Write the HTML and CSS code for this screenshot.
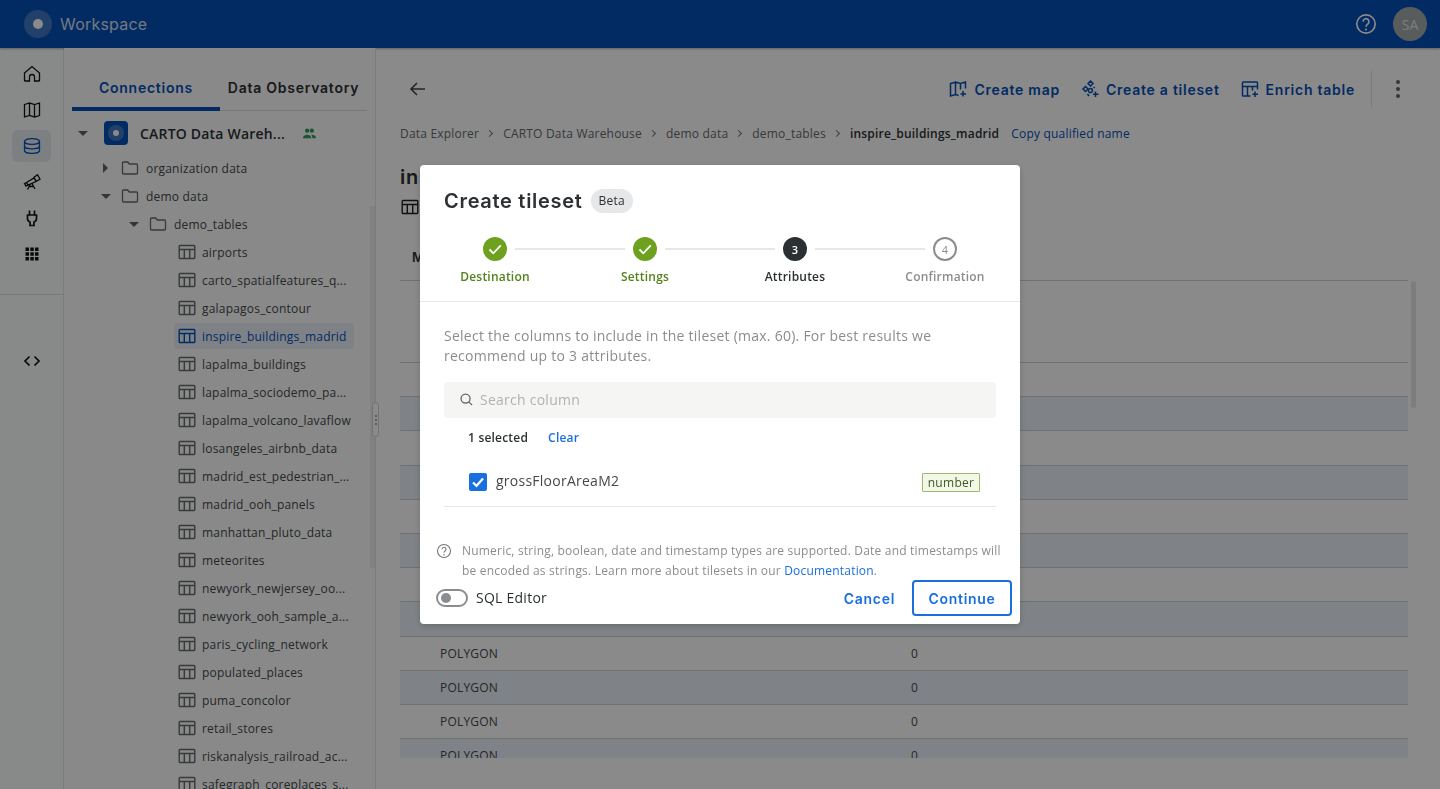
FILE: index.html
```html
<!DOCTYPE html>
<html lang="en">
<head>
    <meta charset="UTF-8">
    <title>Workspace</title>
    <link rel="stylesheet" href="styles.css">
</head>
<body>
    <svg class="icon-defs" width="0" height="0">
        <symbol id="i-table" viewBox="0 0 18 18"><path d="M2 2.500h14a.8.8 0 0 1 .8.8v11.400a.8.8 0 0 1-.8.8H2a.8.8 0 0 1-.8-.8V3.300a.8.8 0 0 1 .8-.8zM1.200 6.500h15.600M6.300 6.500V15.500M11.700 6.500V15.500" fill="none" stroke="currentColor" stroke-width="1.400"/></symbol>
        <symbol id="i-folder" viewBox="0 0 18 18"><path d="M1.500 4a1 1 0 0 1 1-1h4.200l1.600 2h7.200a1 1 0 0 1 1 1v8a1 1 0 0 1-1 1h-13a1 1 0 0 1-1-1z" fill="none" stroke="currentColor" stroke-width="1.300"/></symbol>
    </svg>

    <div class="topbar">
        <div class="brand">
            <span class="brand-logo"><span class="brand-dot"></span></span>
            <span class="brand-name">Workspace</span>
        </div>
        <div class="topbar-right">
            <svg class="help-icon" viewBox="0 0 24 24"><circle cx="12" cy="12" r="10" fill="none" stroke="currentColor" stroke-width="1.800"/><path d="M8.800 9.400a3.200 3.200 0 1 1 5 2.700c-1.100.8-1.800 1.300-1.800 2.900" fill="none" stroke="currentColor" stroke-width="1.800"/><circle cx="12" cy="18" r="1.200" fill="currentColor"/></svg>
            <span class="avatar">SA</span>
        </div>
    </div>

    <div class="app">
        <div class="rail">
            <div class="rail-items">
                <a class="rail-item"><svg viewBox="0 0 18 18"><path d="M1.500 8L9 1.500 16.500 8v7.500a.5.5 0 0 1-.5.5H11.500v-4a2.500 2.500 0 0 0-5 0v4H2a.5.5 0 0 1-.5-.5z"/></svg></a>
                <a class="rail-item"><svg viewBox="0 0 18 18"><path d="M1.500 3.500l5-1.500 5 1.500 5-1.500v12.500l-5 1.500-5-1.500-5 1.500zM6.500 2v12.500M11.500 3.500V16"/></svg></a>
                <a class="rail-item active"><svg viewBox="0 0 18 18"><ellipse cx="9" cy="4.500" rx="7.500" ry="2.900"/><path d="M1.500 4.500v9c0 1.600 3.400 2.900 7.500 2.900s7.500-1.300 7.500-2.900v-9M1.500 9c0 1.600 3.400 2.900 7.500 2.900s7.500-1.300 7.500-2.900"/></svg></a>
                <a class="rail-item"><svg viewBox="0 0 18 18"><path d="M1.500 10.500l2-1 1.500 2.600-2 1zM3.500 9.500L11 5l2 3.500-8 3.600zM11 4.300l3.500-2.500 2.500 4.500-4 2zM7.500 11l-3 5.500M9 10.500l3 5.500M6.500 13.500H10"/></svg></a>
                <a class="rail-item"><svg viewBox="0 0 18 18"><path class="heavy" d="M6.500 1.500v4.500M11.500 1.500v4.500M4.500 6h9v3.500c0 1.500-1.200 3-2.500 3.500v3.500H7V13c-1.300-.5-2.500-2-2.500-3.500z"/></svg></a>
                <a class="rail-item"><svg class="solid" viewBox="0 0 18 18"><path d="M2.500 2.500h3.500V6H2.500zM7.300 2.500h3.500V6H7.300zM12 2.500h3.500V6H12zM2.500 7.300h3.500v3.500H2.500zM7.300 7.300h3.500v3.500H7.300zM12 7.300h3.500v3.500H12zM2.500 12h3.500v3.500H2.500zM7.300 12h3.500v3.500H7.300zM12 12h3.500v3.500H12z"/></svg></a>
            </div>
            <div class="rail-sep"></div>
            <a class="rail-item"><svg viewBox="0 0 18 18"><path class="heavy" d="M6.500 4.500L2 9l4.500 4.500M11.500 4.500L16 9l-4.500 4.500"/></svg></a>
        </div>

        <div class="explorer">
            <div class="tabs">
                <div class="tab active">Connections</div>
                <div class="tab">Data Observatory</div>
            </div>
            <div class="tree">
                <div class="conn-row">
                    <span class="caret down"></span>
                    <span class="conn-logo"><span class="conn-dot"></span></span>
                    <span class="conn-name">CARTO Data Wareh...</span>
                    <svg class="shared-icon" viewBox="0 0 16 16"><circle cx="5.500" cy="5" r="2.300"/><circle cx="10.500" cy="5" r="2.300"/><path d="M1 13c0-2.500 2-3.800 4.500-3.800S10 10.500 10 13zM11 13c0-1.500-.4-2.800-1.300-3.700 3-.4 5.300 1 5.300 3.700z"/></svg>
                </div>
                <div class="tree-row lvl-1"><span class="caret right"></span><svg class="row-icon"><use href="#i-folder"/></svg>organization data</div>
                <div class="tree-row lvl-1"><span class="caret down"></span><svg class="row-icon"><use href="#i-folder"/></svg>demo data</div>
                <div class="tree-row lvl-2"><span class="caret down"></span><svg class="row-icon"><use href="#i-folder"/></svg>demo_tables</div>
                <div class="tree-row lvl-3"><svg class="row-icon"><use href="#i-table"/></svg>airports</div>
                <div class="tree-row lvl-3"><svg class="row-icon"><use href="#i-table"/></svg>carto_spatialfeatures_q...</div>
                <div class="tree-row lvl-3"><svg class="row-icon"><use href="#i-table"/></svg>galapagos_contour</div>
                <div class="tree-row lvl-3 selected"><svg class="row-icon"><use href="#i-table"/></svg>inspire_buildings_madrid</div>
                <div class="tree-row lvl-3"><svg class="row-icon"><use href="#i-table"/></svg>lapalma_buildings</div>
                <div class="tree-row lvl-3"><svg class="row-icon"><use href="#i-table"/></svg>lapalma_sociodemo_pa...</div>
                <div class="tree-row lvl-3"><svg class="row-icon"><use href="#i-table"/></svg>lapalma_volcano_lavaflow</div>
                <div class="tree-row lvl-3"><svg class="row-icon"><use href="#i-table"/></svg>losangeles_airbnb_data</div>
                <div class="tree-row lvl-3"><svg class="row-icon"><use href="#i-table"/></svg>madrid_est_pedestrian_...</div>
                <div class="tree-row lvl-3"><svg class="row-icon"><use href="#i-table"/></svg>madrid_ooh_panels</div>
                <div class="tree-row lvl-3"><svg class="row-icon"><use href="#i-table"/></svg>manhattan_pluto_data</div>
                <div class="tree-row lvl-3"><svg class="row-icon"><use href="#i-table"/></svg>meteorites</div>
                <div class="tree-row lvl-3"><svg class="row-icon"><use href="#i-table"/></svg>newyork_newjersey_oo...</div>
                <div class="tree-row lvl-3"><svg class="row-icon"><use href="#i-table"/></svg>newyork_ooh_sample_a...</div>
                <div class="tree-row lvl-3"><svg class="row-icon"><use href="#i-table"/></svg>paris_cycling_network</div>
                <div class="tree-row lvl-3"><svg class="row-icon"><use href="#i-table"/></svg>populated_places</div>
                <div class="tree-row lvl-3"><svg class="row-icon"><use href="#i-table"/></svg>puma_concolor</div>
                <div class="tree-row lvl-3"><svg class="row-icon"><use href="#i-table"/></svg>retail_stores</div>
                <div class="tree-row lvl-3"><svg class="row-icon"><use href="#i-table"/></svg>riskanalysis_railroad_ac...</div>
                <div class="tree-row lvl-3"><svg class="row-icon"><use href="#i-table"/></svg>safegraph_coreplaces_s...</div>
            </div>
            <div class="tree-scrollbar"></div>
            <div class="resize-handle"><span></span><span></span><span></span></div>
        </div>

        <div class="main">
            <div class="actions">
                <svg class="back-icon" viewBox="0 0 20 20"><path d="M17 10H3.500M9 4l-6 6 6 6"/></svg>
                <div class="action-group">
                    <a class="action"><svg viewBox="0 0 18 18"><path d="M9.500 15.500l-3-1L1.500 16V3.500l5-1.500 5 1.500L16.500 2v6.500M6.500 2v12.500M11.500 3.500v6M14 11v5.500M11.500 14h5.500"/></svg>Create map</a>
                    <a class="action"><svg viewBox="0 0 18 18"><path d="M9.500 1L12 3.500 9.500 6 7 3.500zM4.500 6.500L7 9l-2.500 2.500L2 9zM9.500 8.500a2 2 0 1 1-.1 4 2 2 0 0 1 .1-4zM14.500 11.500v5.500M12 14.300h5.500M12.500 7.500h1.500M6.500 14l1.500 2"/></svg>Create a tileset</a>
                    <a class="action"><svg viewBox="0 0 18 18"><path d="M9.500 16H2.300a.8.8 0 0 1-.8-.8V2.800a.8.8 0 0 1 .8-.8h13.400a.8.8 0 0 1 .8.8v6.700M1.500 6.500h15M6.500 6.500V16M11.500 6.500v4M14 11.500V17M11.500 14.300h5.500"/></svg>Enrich table</a>
                </div>
                <span class="action-sep"></span>
                <span class="kebab"><i></i><i></i><i></i></span>
            </div>

            <div class="crumbs">
                <span>Data Explorer</span><span class="crumb-sep"></span>
                <span>CARTO Data Warehouse</span><span class="crumb-sep"></span>
                <span>demo data</span><span class="crumb-sep"></span>
                <span>demo_tables</span><span class="crumb-sep"></span>
                <strong>inspire_buildings_madrid</strong>
                <a class="copy-link">Copy qualified name</a>
            </div>

            <h1 class="page-title">inspire_buildings_madrid</h1>
            <div class="page-meta"><svg class="row-icon"><use href="#i-table"/></svg></div>
            <div class="page-tab">Map</div>

            <div class="table-wrap">
                <div class="table-head"></div>
                <div class="table-row plain"></div>
                <div class="table-row striped"><span>POLYGON</span><span>0</span></div>
                <div class="table-row plain"><span>POLYGON</span><span>0</span></div>
                <div class="table-row striped"><span>POLYGON</span><span>0</span></div>
                <div class="table-row plain"><span>POLYGON</span><span>0</span></div>
                <div class="table-row striped"><span>POLYGON</span><span>0</span></div>
                <div class="table-row plain"><span>POLYGON</span><span>0</span></div>
                <div class="table-row striped"><span>POLYGON</span><span>0</span></div>
                <div class="table-row plain"><span>POLYGON</span><span>0</span></div>
                <div class="table-row striped"><span>POLYGON</span><span>0</span></div>
                <div class="table-row plain"><span>POLYGON</span><span>0</span></div>
                <div class="table-row striped"><span>POLYGON</span><span>0</span></div>
                <div class="table-scrollbar"></div>
            </div>
        </div>
    </div>

    <div class="scrim">
        <div class="modal">
            <div class="modal-head">
                <h2>Create tileset</h2>
                <span class="beta">Beta</span>
            </div>
            <div class="stepper">
                <div class="step done">
                    <span class="step-dot"><svg viewBox="0 0 24 24"><path d="M6.500 12.500l3.800 3.800 7.500-8"/></svg></span>
                    <span class="step-label">Destination</span>
                </div>
                <div class="step done">
                    <span class="step-dot"><svg viewBox="0 0 24 24"><path d="M6.500 12.500l3.800 3.800 7.500-8"/></svg></span>
                    <span class="step-label">Settings</span>
                </div>
                <div class="step current">
                    <span class="step-dot">3</span>
                    <span class="step-label">Attributes</span>
                </div>
                <div class="step todo">
                    <span class="step-dot">4</span>
                    <span class="step-label">Confirmation</span>
                </div>
            </div>
            <div class="modal-body">
                <p class="intro">Select the columns to include in the tileset (max. 60). For best results we recommend up to 3 attributes.</p>
                <div class="search">
                    <svg viewBox="0 0 16 16"><circle cx="7" cy="7" r="4.800"/><path d="M10.500 10.500L14 14"/></svg>
                    <span>Search column</span>
                </div>
                <div class="selected-bar">
                    <span>1 selected</span>
                    <a>Clear</a>
                </div>
                <div class="column-row">
                    <span class="checkbox"><svg viewBox="0 0 18 18"><path d="M4 9.500l3.500 3.300L14 5.500"/></svg></span>
                    <span class="column-name">grossFloorAreaM2</span>
                    <span class="type-chip">number</span>
                </div>
            </div>
            <div class="note">
                <svg viewBox="0 0 16 16"><circle cx="8" cy="8" r="6.500"/><path d="M6 6.300a2 2 0 1 1 3.100 1.700c-.7.500-1.100.8-1.100 1.700"/><circle class="dot" cx="8" cy="11.800" r=".8"/></svg>
                <p>Numeric, string, boolean, date and timestamp types are supported. Date and timestamps will be encoded as strings. Learn more about tilesets in our <a>Documentation</a>.</p>
            </div>
            <div class="modal-foot">
                <span class="switch"><span></span></span>
                <span class="switch-label">SQL Editor</span>
                <a class="btn-text">Cancel</a>
                <a class="btn-outline">Continue</a>
            </div>
        </div>
    </div>
</body>
</html>
```

FILE: styles.css
```css
* {
    box-sizing: border-box;
}

html, body {
    height: 100%;
}

body {
    margin: 0;
    font-family: 'Open Sans', sans-serif;
    color: #2c3032;
    background-color: #fff;
    overflow: hidden;
}

.icon-defs {
    position: absolute;
}

.topbar {
    height: 48px;
    display: flex;
    justify-content: space-between;
    align-items: center;
    padding: 0 13px 0 24px;
    background-color: #0451b7;
    box-shadow: 0 1px 2px rgba(0, 0, 0, .3);
    position: relative;
}

.brand {
    display: flex;
    align-items: center;
    gap: 8px;
}

.brand-logo {
    width: 28px;
    height: 28px;
    border-radius: 50%;
    background-color: #3d79c4;
    display: flex;
    align-items: center;
    justify-content: center;
}

.brand-dot {
    width: 10px;
    height: 10px;
    border-radius: 50%;
    background-color: #fff;
}

.brand-name {
    font-family: Inter, sans-serif;
    font-size: 16px;
    color: #d5dfee;
    letter-spacing: .2px;
}

.topbar-right {
    display: flex;
    align-items: center;
    gap: 16px;
}

.help-icon {
    width: 22px;
    height: 22px;
    color: #fff;
}

.avatar {
    width: 34px;
    height: 34px;
    border-radius: 50%;
    background-color: #a4abad;
    color: #e6e6e6;
    font-size: 14px;
    display: flex;
    align-items: center;
    justify-content: center;
}

.app {
    display: flex;
    height: 741px;
}

.rail {
    width: 64px;
    flex-shrink: 0;
    border-right: 1px solid #e4e6e8;
    background-color: #fcfdfd;
    padding-top: 8px;
    display: flex;
    flex-direction: column;
    align-items: center;
}

.rail-items {
    display: flex;
    flex-direction: column;
    align-items: center;
    gap: 4px;
    padding: 2px 0 0;
}

.rail-item {
    width: 39px;
    height: 32px;
    border-radius: 6px;
    display: flex;
    align-items: center;
    justify-content: center;
    color: #111;
}

.rail-item svg {
    width: 18px;
    height: 18px;
    fill: none;
    stroke: currentColor;
    stroke-width: 1.300;
}

.rail-item .heavy {
    stroke-width: 1.700;
}

.rail-item svg.solid {
    fill: currentColor;
    stroke: none;
}

.rail-item.active {
    background-color: #e8ecf3;
    color: #0451b7;
}

.rail-sep {
    width: 100%;
    height: 1px;
    background-color: #dfe1e3;
    margin: 24px 0 50px;
}

.explorer {
    width: 312px;
    flex-shrink: 0;
    padding: 0 8px;
    border-right: 1px solid #e4e6e8;
    background-color: #fdfefe;
    position: relative;
}

.tabs {
    display: flex;
    margin-top: 16px;
    height: 47px;
    border-bottom: 1px solid #dcdee0;
    width: 295px;
}

.tab {
    font-family: Inter, sans-serif;
    font-size: 14px;
    font-weight: 600;
    letter-spacing: .75px;
    padding-top: 15px;
    text-align: center;
    white-space: nowrap;
}

.tab:first-child {
    width: 148px;
}

.tab:last-child {
    flex: 1;
}

.tab.active {
    color: #0451b7;
    border-bottom: 4px solid #0451b7;
    height: 47px;
}

.tree {
    padding-top: 8px;
}

.conn-row {
    display: flex;
    align-items: center;
    height: 28px;
    margin-bottom: 7px;
    padding-left: 6px;
}

.caret {
    width: 0;
    height: 0;
    display: inline-block;
    flex-shrink: 0;
}

.caret.down {
    border-left: 5px solid transparent;
    border-right: 5px solid transparent;
    border-top: 5px solid #5e6264;
}

.caret.right {
    border-top: 5px solid transparent;
    border-bottom: 5px solid transparent;
    border-left: 5px solid #5e6264;
}

.conn-logo {
    width: 24px;
    height: 24px;
    border-radius: 4px;
    background-color: #0451b7;
    display: flex;
    align-items: center;
    justify-content: center;
    margin-left: 16px;
}

.conn-dot {
    width: 6px;
    height: 6px;
    border-radius: 50%;
    background-color: #fff;
    box-shadow: 0 0 0 5px #3d79c4;
}

.conn-name {
    font-size: 14px;
    font-weight: 600;
    margin-left: 12px;
    letter-spacing: .2px;
}

.shared-icon {
    width: 15px;
    height: 15px;
    margin-left: 17px;
    fill: #2f9e62;
}

.tree-row {
    display: flex;
    align-items: center;
    height: 28px;
    font-size: 12px;
    letter-spacing: .2px;
    color: #45494b;
    white-space: nowrap;
}

.tree-row .caret {
    margin-right: 10px;
}

.tree-row .caret.right {
    margin: 0 13px 0 2px;
}

.lvl-1 {
    padding-left: 29px;
}

.lvl-2 {
    padding-left: 57px;
}

.lvl-3 {
    margin-left: 102px;
    padding-left: 4px;
}

.row-icon {
    width: 18px;
    height: 18px;
    margin-right: 6px;
    color: #666a6c;
    flex-shrink: 0;
}

.caret + .row-icon {
    margin-right: 7px;
}

.tree-row.selected {
    color: #0451b7;
    background-color: #e9eff7;
    width: 180px;
    height: 26px;
    margin-top: 1px;
    margin-bottom: 1px;
    border-radius: 4px;
}

.tree-row.selected .row-icon {
    color: #0451b7;
}

.tree-scrollbar {
    position: absolute;
    right: 0;
    top: 158px;
    width: 5px;
    height: 362px;
    background-color: #eceeee;
}

.resize-handle {
    position: absolute;
    right: -4px;
    top: 354px;
    width: 7px;
    height: 35px;
    border: 1px solid #d0d2d4;
    border-radius: 4px;
    background-color: #fff;
    display: flex;
    flex-direction: column;
    align-items: center;
    justify-content: center;
    gap: 2px;
}

.resize-handle span {
    width: 2px;
    height: 2px;
    background-color: #aaa;
}

.main {
    flex: 1;
    min-width: 0;
    padding: 0 32px 0 24px;
}

.actions {
    display: flex;
    align-items: center;
    height: 42px;
    margin-top: 20px;
}

.back-icon {
    width: 20px;
    height: 20px;
    margin-left: 8px;
    fill: none;
    stroke: #45494b;
    stroke-width: 1.600;
}

.action-group {
    display: flex;
    gap: 21px;
    margin-left: auto;
}

.action {
    display: flex;
    align-items: center;
    gap: 7px;
    font-family: Inter, sans-serif;
    font-size: 14px;
    font-weight: 600;
    letter-spacing: .75px;
    color: #0451b7;
}

.action svg {
    width: 18px;
    height: 18px;
    fill: none;
    stroke: currentColor;
    stroke-width: 1.500;
}

.action-sep {
    width: 1px;
    height: 36px;
    background-color: #dfe1e3;
    margin: 0 24px 0 16px;
}

.kebab {
    display: flex;
    flex-direction: column;
    gap: 3px;
    margin-right: 8px;
}

.kebab i {
    width: 4px;
    height: 4px;
    border-radius: 50%;
    background-color: #666;
}

.crumbs {
    display: flex;
    align-items: center;
    font-size: 12px;
    letter-spacing: .2px;
    color: #666a6c;
    margin-top: 14px;
    height: 18px;
    white-space: nowrap;
}

.crumb-sep {
    width: 5px;
    height: 5px;
    border-top: 1px solid #777;
    border-right: 1px solid #777;
    transform: rotate(45deg);
    margin: 0 11px 0 8px;
}

.crumbs strong {
    font-weight: 600;
    color: #2c3032;
}

.copy-link {
    color: #0451b7;
    margin-left: 12px;
}

.page-title {
    font-family: Inter, sans-serif;
    font-size: 20px;
    font-weight: 600;
    letter-spacing: .7px;
    margin: 21px 0 0;
    line-height: 28px;
}

.page-meta {
    margin: 7px 0 0 1px;
    height: 20px;
}

.page-meta .row-icon {
    color: #1c1f20;
}

.page-tab {
    font-family: Inter, sans-serif;
    font-size: 13px;
    font-weight: 600;
    margin: 31px 0 0 12px;
    height: 20px;
}

.table-wrap {
    position: relative;
    width: 1008px;
    margin-top: 11px;
    height: 478px;
    clip-path: inset(0 -10px 0 0);
    border-top: 1px solid #cfd0d2;
}

.table-head {
    height: 82px;
    border-bottom: 1px solid #cfd0d2;
}

.table-row {
    height: 34.200px;
    border-bottom: 1px solid #cfd0d2;
    font-size: 12px;
    letter-spacing: .2px;
    display: flex;
    align-items: center;
    padding-left: 40px;
    color: #45494b;
}

.table-row.striped {
    background-color: #ebf1f8;
}

.table-row span:first-child {
    width: 471px;
}

.table-scrollbar {
    position: absolute;
    top: 0;
    right: -8px;
    width: 5px;
    height: 127px;
    border-radius: 2px;
    background-color: #e6e7e8;
}

.scrim {
    position: fixed;
    inset: 0;
    z-index: 10;
    background-color: rgba(0, 0, 0, .46);
    display: flex;
    align-items: center;
    justify-content: center;
}

.modal {
    width: 600px;
    height: 459px;
    background-color: #fff;
    border-radius: 4px;
    box-shadow: 0 2px 6px rgba(0, 0, 0, .2);
    display: flex;
    flex-direction: column;
}

.modal-head {
    display: flex;
    align-items: center;
    padding: 24px 24px 0;
    height: 48px;
    gap: 8px;
}

.modal-head h2 {
    font-family: Inter, sans-serif;
    font-size: 20px;
    font-weight: 600;
    letter-spacing: .7px;
    margin: 0;
    color: #2c3032;
}

.beta {
    font-size: 12px;
    letter-spacing: .2px;
    height: 24px;
    line-height: 24px;
    padding: 0 8px;
    border-radius: 12px;
    background-color: #e6e7e8;
}

.stepper {
    display: flex;
    height: 89px;
    padding-top: 24px;
    border-bottom: 1px solid #e6e7e8;
}

.step {
    width: 150px;
    position: relative;
    display: flex;
    flex-direction: column;
    align-items: center;
    gap: 7px;
}

.step:not(:last-child):after {
    content: "";
    position: absolute;
    left: 95px;
    width: 110px;
    top: 11px;
    height: 2px;
    background-color: #e6e7e8;
}

.step-dot {
    width: 24px;
    height: 24px;
    border-radius: 50%;
    display: flex;
    align-items: center;
    justify-content: center;
    font-size: 11px;
    font-weight: 600;
}

.step-dot svg {
    width: 24px;
    height: 24px;
    fill: none;
    stroke: #fff;
    stroke-width: 1.800;
}

.step-label {
    font-size: 12px;
    font-weight: 600;
    letter-spacing: .2px;
}

.step.done .step-dot {
    background-color: #6ea11f;
}

.step.done .step-label {
    color: #55801a;
}

.step.current .step-dot {
    background-color: #2c3032;
    color: #fff;
}

.step.todo .step-dot {
    border: 2px solid #8a8d8f;
    color: #8a8d8f;
    font-weight: 400;
}

.step.todo .step-label {
    color: #8a8d8f;
}

.modal-body {
    padding: 24px 24px 0;
    flex: 1;
}

.intro {
    margin: 0;
    font-size: 14px;
    line-height: 20px;
    letter-spacing: .25px;
    color: #8a8d8f;
}

.search {
    height: 36px;
    margin-top: 16px;
    border-radius: 4px;
    background-color: #f5f5f3;
    display: flex;
    align-items: center;
    gap: 6px;
    padding: 0 0 2px 15px;
    font-size: 14px;
    letter-spacing: .25px;
    color: #b0b2b3;
}

.search svg {
    width: 15px;
    height: 15px;
    fill: none;
    stroke: #666;
    stroke-width: 1.400;
}

.selected-bar {
    display: flex;
    gap: 20px;
    padding: 11px 24px 0;
    font-size: 12px;
    font-weight: 600;
    letter-spacing: .2px;
    line-height: 18px;
}

.selected-bar a {
    color: #1a6fe0;
}

.column-row {
    display: flex;
    align-items: center;
    height: 50px;
    margin-top: 10px;
    padding: 0 16px 0 25px;
    border-bottom: 1px solid #e6e7e8;
}

.checkbox {
    width: 18px;
    height: 18px;
    border-radius: 2px;
    background-color: #1a6fe0;
    margin-right: 9px;
}

.checkbox svg {
    display: block;
    fill: none;
    stroke: #fff;
    stroke-width: 2.200;
}

.column-name {
    font-size: 14px;
    letter-spacing: .25px;
    color: #45494b;
    flex: 1;
    margin-bottom: 2px;
}

.type-chip {
    width: 58px;
    height: 19px;
    margin-top: 1px;
    border: 1px solid #9cbb6a;
    background-color: #f2f7e8;
    border-radius: 1px;
    font-size: 12px;
    letter-spacing: .3px;
    line-height: 17px;
    text-align: center;
    color: #3f5a1f;
}

.note {
    display: flex;
    gap: 10px;
    padding: 0 16px;
    margin-bottom: -1px;
}

.note svg {
    width: 16px;
    height: 16px;
    flex-shrink: 0;
    margin-top: 2px;
    fill: none;
    stroke: #777;
    stroke-width: 1.100;
}

.note svg .dot {
    fill: #777;
    stroke: none;
}

.note p {
    margin: 0;
    font-size: 12px;
    line-height: 20px;
    color: #8a8d8f;
    letter-spacing: .2px;
}

.note a {
    color: #1a6fe0;
}

.modal-foot {
    display: flex;
    align-items: center;
    height: 36px;
    margin-bottom: 8px;
    padding: 0 8px 0 16px;
}

.switch {
    width: 32px;
    height: 18px;
    border: 2px solid #8a8d8f;
    border-radius: 9px;
    display: flex;
    align-items: center;
    padding-left: 3px;
    margin-right: 8px;
}

.switch span {
    width: 10px;
    height: 10px;
    border-radius: 50%;
    background-color: #8a8d8f;
}

.switch-label {
    font-size: 14px;
    letter-spacing: .25px;
    flex: 1;
    margin-bottom: 1px;
}

.btn-text, .btn-outline {
    font-family: Inter, sans-serif;
    font-size: 14px;
    font-weight: 600;
    letter-spacing: .7px;
    color: #1a6fe0;
}

.btn-text {
    margin-right: 17px;
}

.btn-outline {
    width: 100px;
    height: 36px;
    border: 2px solid #1a6fe0;
    border-radius: 4px;
    display: flex;
    align-items: center;
    justify-content: center;
}
```
